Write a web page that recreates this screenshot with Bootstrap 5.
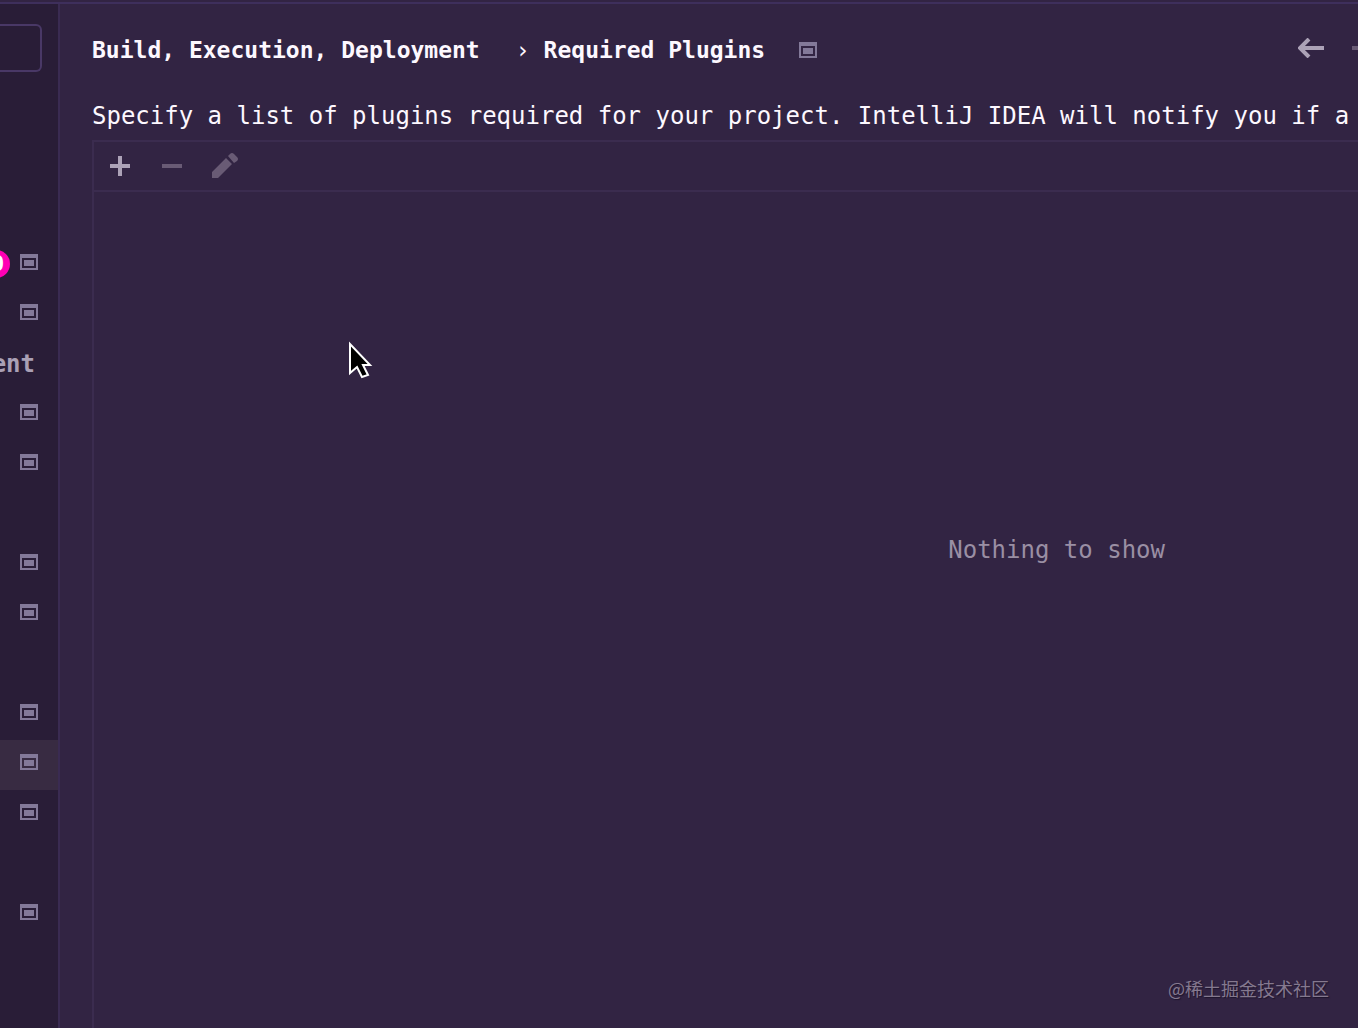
<!DOCTYPE html>
<html lang="en">
<head>
<meta charset="utf-8">
<meta name="viewport" content="width=device-width, initial-scale=1">
<title>Required Plugins</title>
<link href="https://cdn.jsdelivr.net/npm/bootstrap@5.3.0/dist/css/bootstrap.min.css" rel="stylesheet">
<style>
  body { background: #322443; color: #fdf8ff; font-family: "DejaVu Sans Mono", monospace; font-size: 24px; line-height: 32px; }
  .window { border-top: 2px solid #3e2f5c; margin-top: 2px; height: calc(100vh - 2px); }
  .tree { width: 60px; background: #291d37; border-right: 2px solid #3a2b52; }
  .search { height: 48px; margin: 20px 16px 168px 0; background: transparent; border: 2px solid #493866; border-left: 0; border-radius: 0 6px 6px 0; color: #fff; outline: 0; min-width: 0; }
  .tree-row { height: 50px; padding: 0 20px 6px 0; color: #aaa0b5; }
  .tree-row.selected { background: #382b42; }
  .tree-group { padding: 0 23px 2px 0; }
  .count { right: 48px; top: 10px; width: 28px; height: 28px; padding-left: 3px; border-radius: 14px; background: #ff00b4; color: #fff; font-size: 22px; line-height: 28px; }
  .page { padding-left: 32px; }
  .head { height: 92px; }
  .crumbs { font-size: 23px; font-weight: 700; gap: 14px; }
  .crumbs .sep { font-weight: 400; margin-left: 22px; }
  .scope { margin-left: 20px; }
  .nav-arrows { gap: 28px; margin-right: -20px; padding-bottom: 4px; }
  .tool { background: none; border: 0; padding: 0; line-height: 0; color: #aca2b7; }
  .tool:disabled { color: #695b75; }
  .intro { height: 44px; padding-top: 4px; }
  .plugins { border: 2px solid #3b2c4f; border-width: 2px 0 0 2px; }
  .toolbar { height: 50px; padding-left: 12px; gap: 24px; border-bottom: 2px solid #3b2c4f; }
  .nothing { padding: 0 0 120px 52%; margin-right: -4px; color: #9a8fa4; }
  .watermark { right: 29px; bottom: 26px; color: #85798f; font: 18px/28px "Noto Sans CJK SC", sans-serif; text-shadow: 1px 1px 1px #1e142c; }
  .pointer { left: 347px; top: 340px; }
</style>
<script src="https://cdn.jsdelivr.net/npm/bootstrap@5.3.0/dist/js/bootstrap.bundle.min.js"></script>
</head>
<body class="overflow-hidden position-relative">
<svg class="d-none">
  <symbol id="project" viewBox="0 0 18 16"><path fill="#837999" fill-rule="evenodd" d="M0 0H18V16H0ZM2 4V14H16V4ZM4 6H14V12H4Z"/></symbol>
</svg>
<div class="window d-flex overflow-hidden">
  <aside class="tree flex-shrink-0 d-flex flex-column overflow-hidden">
    <input class="search flex-shrink-0" type="search" aria-label="Search settings">
    <div class="tree-row flex-shrink-0 d-flex align-items-center justify-content-end position-relative"><span class="count position-absolute text-center fw-bold">0</span><svg width="18" height="16"><use href="#project"/></svg></div>
    <div class="tree-row flex-shrink-0 d-flex align-items-center justify-content-end"><svg width="18" height="16"><use href="#project"/></svg></div>
    <div class="tree-row tree-group flex-shrink-0 d-flex align-items-center justify-content-end fw-bold">ent</div>
    <div class="tree-row flex-shrink-0 d-flex align-items-center justify-content-end"><svg width="18" height="16"><use href="#project"/></svg></div>
    <div class="tree-row flex-shrink-0 d-flex align-items-center justify-content-end"><svg width="18" height="16"><use href="#project"/></svg></div>
    <div class="tree-row flex-shrink-0"></div>
    <div class="tree-row flex-shrink-0 d-flex align-items-center justify-content-end"><svg width="18" height="16"><use href="#project"/></svg></div>
    <div class="tree-row flex-shrink-0 d-flex align-items-center justify-content-end"><svg width="18" height="16"><use href="#project"/></svg></div>
    <div class="tree-row flex-shrink-0"></div>
    <div class="tree-row flex-shrink-0 d-flex align-items-center justify-content-end"><svg width="18" height="16"><use href="#project"/></svg></div>
    <div class="tree-row selected flex-shrink-0 d-flex align-items-center justify-content-end"><svg width="18" height="16"><use href="#project"/></svg></div>
    <div class="tree-row flex-shrink-0 d-flex align-items-center justify-content-end"><svg width="18" height="16"><use href="#project"/></svg></div>
    <div class="tree-row flex-shrink-0"></div>
    <div class="tree-row flex-shrink-0 d-flex align-items-center justify-content-end"><svg width="18" height="16"><use href="#project"/></svg></div>
  </aside>
  <main class="page flex-grow-1 d-flex flex-column overflow-hidden text-nowrap">
    <header class="head flex-shrink-0 d-flex align-items-center">
      <div class="crumbs d-flex align-items-center"><span>Build, Execution, Deployment</span><span class="sep">›</span><span>Required Plugins</span>
        <svg class="scope" width="18" height="16"><use href="#project"/></svg></div>
      <div class="nav-arrows d-flex ms-auto">
        <button class="tool" aria-label="Back"><svg width="26" height="20" fill="none" stroke="currentColor" stroke-width="4"><path d="M26 10H3M11 1 2 10l9 9"/></svg></button>
        <button class="tool" aria-label="Forward" disabled><svg width="26" height="20" fill="none" stroke="currentColor" stroke-width="4"><path d="M0 10H23M15 1l9 9-9 9"/></svg></button>
      </div>
    </header>
    <div class="intro flex-shrink-0">Specify a list of plugins required for your project. IntelliJ IDEA will notify you if a</div>
    <section class="plugins flex-grow-1 d-flex flex-column">
      <div class="toolbar d-flex align-items-center">
        <button class="tool" aria-label="Add"><svg width="28" height="28" fill="currentColor"><path d="M12 4h4v8h8v4h-8v8h-4v-8H4v-4h8z"/></svg></button>
        <button class="tool" aria-label="Remove" disabled><svg width="28" height="28" fill="currentColor"><path d="M4 12h20v4H4z"/></svg></button>
        <button class="tool" aria-label="Edit" disabled><svg width="28" height="28" fill="currentColor"><path d="M2 20 16 6l6 6L8 26H2ZM18 4l2-2q2-2 4 0l3 3q2 2 0 4l-3 2Z"/></svg></button>
      </div>
      <div class="nothing flex-grow-1 d-flex align-items-center justify-content-center">Nothing to show</div>
    </section>
  </main>
</div>
<svg class="pointer position-absolute" width="28" height="42"><path d="M3 4v29l7-6 5 10 6-2-5-10h7Z" fill="#000" stroke="#fff" stroke-width="2"/></svg>
<div class="watermark position-absolute">@稀土掘金技术社区</div>
</body>
</html>
